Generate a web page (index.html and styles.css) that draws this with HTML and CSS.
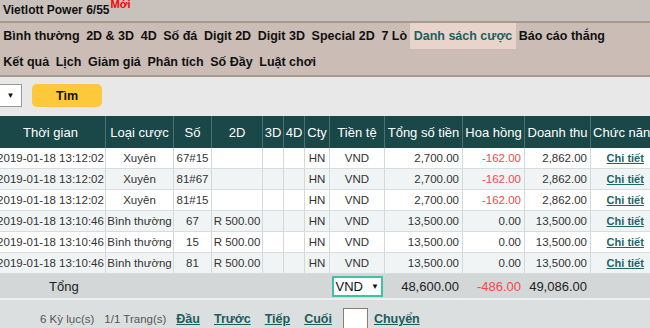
FILE: index.html
```html
<!DOCTYPE html>
<html lang="vi">
<head>
<meta charset="utf-8">
<title>Danh sách cược</title>
<link rel="stylesheet" href="styles.css">
</head>
<body>
<header class="top">
  <div class="title">Vietlott Power 6/55<span class="new">Mới</span></div>
  <nav class="menu">
    <div class="menu-row">
      <a class="menu-item" href="#">Bình thường</a>
      <a class="menu-item" href="#">2D &amp; 3D</a>
      <a class="menu-item" href="#">4D</a>
      <a class="menu-item" href="#">Số đá</a>
      <a class="menu-item" href="#">Digit 2D</a>
      <a class="menu-item" href="#">Digit 3D</a>
      <a class="menu-item" href="#">Special 2D</a>
      <a class="menu-item" href="#">7 Lò</a>
      <a class="menu-item active" href="#">Danh sách cược</a>
      <a class="menu-item" href="#">Báo cáo thắng</a>
    </div>
    <div class="menu-row">
      <a class="menu-item" href="#">Kết quả</a>
      <a class="menu-item" href="#">Lịch</a>
      <a class="menu-item" href="#">Giảm giá</a>
      <a class="menu-item" href="#">Phân tích</a>
      <a class="menu-item" href="#">Số Đầy</a>
      <a class="menu-item" href="#">Luật chơi</a>
    </div>
  </nav>
</header>
<main class="content">
  <div class="filter">
    <div class="select-stub"><span class="arrow">▼</span></div>
    <button class="btn-find" type="button">Tìm</button>
  </div>
  <table class="grid">
    <colgroup>
      <col class="c-time"><col class="c-type"><col class="c-num"><col class="c-2d"><col class="c-3d"><col class="c-4d"><col class="c-cty"><col class="c-cur"><col class="c-total"><col class="c-comm"><col class="c-rev"><col class="c-act">
    </colgroup>
    <thead>
      <tr>
        <th>Thời gian</th><th>Loại cược</th><th>Số</th><th>2D</th><th>3D</th><th>4D</th><th>Cty</th><th>Tiền tệ</th><th>Tổng số tiền</th><th>Hoa hồng</th><th>Doanh thu</th><th>Chức năng</th>
      </tr>
    </thead>
    <tbody>
      <tr>
        <td>2019-01-18 13:12:02</td><td>Xuyên</td><td>67#15</td><td></td><td></td><td></td><td>HN</td><td>VND</td><td class="num">2,700.00</td><td class="num neg">-162.00</td><td class="num">2,862.00</td><td><a class="detail" href="#">Chi tiết</a></td>
      </tr>
      <tr>
        <td>2019-01-18 13:12:02</td><td>Xuyên</td><td>81#67</td><td></td><td></td><td></td><td>HN</td><td>VND</td><td class="num">2,700.00</td><td class="num neg">-162.00</td><td class="num">2,862.00</td><td><a class="detail" href="#">Chi tiết</a></td>
      </tr>
      <tr>
        <td>2019-01-18 13:12:02</td><td>Xuyên</td><td>81#15</td><td></td><td></td><td></td><td>HN</td><td>VND</td><td class="num">2,700.00</td><td class="num neg">-162.00</td><td class="num">2,862.00</td><td><a class="detail" href="#">Chi tiết</a></td>
      </tr>
      <tr>
        <td>2019-01-18 13:10:46</td><td>Bình thường</td><td>67</td><td>R 500.00</td><td></td><td></td><td>HN</td><td>VND</td><td class="num">13,500.00</td><td class="num">0.00</td><td class="num">13,500.00</td><td><a class="detail" href="#">Chi tiết</a></td>
      </tr>
      <tr>
        <td>2019-01-18 13:10:46</td><td>Bình thường</td><td>15</td><td>R 500.00</td><td></td><td></td><td>HN</td><td>VND</td><td class="num">13,500.00</td><td class="num">0.00</td><td class="num">13,500.00</td><td><a class="detail" href="#">Chi tiết</a></td>
      </tr>
      <tr>
        <td>2019-01-18 13:10:46</td><td>Bình thường</td><td>81</td><td>R 500.00</td><td></td><td></td><td>HN</td><td>VND</td><td class="num">13,500.00</td><td class="num">0.00</td><td class="num">13,500.00</td><td><a class="detail" href="#">Chi tiết</a></td>
      </tr>
    </tbody>
    <tfoot>
      <tr class="sum">
        <td colspan="7" class="sum-label">Tổng</td>
        <td><div class="cur-select"><span>VND</span><span class="arrow">▼</span></div></td>
        <td class="num">48,600.00</td>
        <td class="num neg">-486.00</td>
        <td class="num">49,086.00</td>
        <td></td>
      </tr>
    </tfoot>
  </table>
  <div class="pager">
    <span class="count">6 Kỳ lục(s)</span>
    <span class="pages">1/1 Trang(s)</span>
    <a class="plink first" href="#">Đầu</a>
    <a class="plink" href="#">Trước</a>
    <a class="plink" href="#">Tiếp</a>
    <a class="plink" href="#">Cuối</a>
    <span class="page-input"></span>
    <a class="plink go" href="#">Chuyển</a>
  </div>
</main>
</body>
</html>
```

FILE: styles.css
```css
html, body {
  margin: 0;
  padding: 0;
  overflow: hidden;
}

body {
  background: #e8e8e8;
  font-family: "Liberation Sans", Arial, sans-serif;
  color: #111;
}

.title {
  height: 21px;
  line-height: 21px;
  padding-left: 3px;
  font-size: 12px;
  font-weight: bold;
  background: #c9c1bc;
  border-bottom: 2px solid #a59a8b;
  color: #111;
  white-space: nowrap;
}

.new {
  color: #ff0000;
  font-size: 11px;
  line-height: 0;
  vertical-align: 6px;
  margin-left: 1px;
}

.menu {
  background: #cbbdb6;
  border-bottom: 2px solid #a59a8b;
}

.menu-row {
  display: flex;
  height: 26px;
  white-space: nowrap;
}

.menu-item {
  padding: 0 3.3px;
  line-height: 26px;
  font-size: 12.5px;
  font-weight: bold;
  color: #111;
  text-decoration: none;
}

.menu-item.active {
  background: #e9d4cc;
  color: #1b5f60;
}

.filter {
  display: flex;
  gap: 10px;
  margin-top: 7px;
  height: 23px;
}

.select-stub {
  width: 21px;
  height: 21px;
  background: #fff;
  border: 1px solid #9a9a9a;
  border-left: 0;
  display: flex;
  align-items: center;
  justify-content: center;
}

.arrow {
  font-size: 8px;
  color: #111;
}

.btn-find {
  width: 70px;
  height: 23px;
  background: #fdc93b;
  border: 0;
  border-radius: 5px;
  padding: 0;
  font-family: "Liberation Sans", Arial, sans-serif;
  font-size: 12.5px;
  font-weight: bold;
  color: #111;
}

.grid {
  margin-top: 9px;
  margin-left: -5px;
  width: 664px;
  table-layout: fixed;
  border-collapse: collapse;
  font-size: 11.5px;
  color: #333;
}

.c-time { width: 110px; }
.c-type { width: 68px; }
.c-num { width: 38px; }
.c-2d { width: 51px; }
.c-3d { width: 21px; }
.c-4d { width: 21px; }
.c-cty { width: 25px; }
.c-cur { width: 55px; }
.c-total { width: 78px; }
.c-comm { width: 62px; }
.c-rev { width: 66px; }
.c-act { width: 69px; }

.grid th {
  height: 32px;
  padding: 0;
  background: #1a4747;
  color: #fff;
  font-size: 13px;
  font-weight: normal;
  border-left: 1px solid #4b7272;
  white-space: nowrap;
  overflow: hidden;
}

.grid td {
  height: 20px;
  padding: 0;
  text-align: center;
  border-left: 1px solid #d3d8d8;
  border-bottom: 1px solid #d7dcdc;
  white-space: nowrap;
  overflow: hidden;
}

.grid tbody tr {
  background: #fff;
}

.grid tbody tr:nth-child(even) {
  background: #f1f4f5;
}

.grid td.num {
  text-align: right;
  padding-right: 3px;
}

.grid td.neg {
  color: #f24a4a;
}

.detail {
  color: #1d6567;
  font-weight: bold;
  font-size: 11px;
}

.grid tr.sum td {
  height: 24px;
  background: #d3d7d7;
  font-size: 13px;
  color: #222;
  border-bottom: 0;
}

.grid tr.sum td.neg {
  color: #f24a4a;
}

.grid td.sum-label {
  text-align: left;
  padding-left: 53px;
}

.cur-select {
  box-sizing: border-box;
  width: 51px;
  height: 21px;
  margin: 0 auto;
  padding-left: 2px;
  display: flex;
  align-items: center;
  gap: 8px;
  background: #fff;
  border: 2px solid #3cc5a5;
  font-size: 13px;
  color: #111;
}

.pager {
  display: flex;
  align-items: center;
  height: 38px;
  padding-left: 40px;
  background: #dcdfdf;
  border-top: 2px solid #eef0f0;
  font-size: 11.5px;
  color: #555;
  white-space: nowrap;
}

.pages {
  margin-left: 10px;
}

.plink {
  color: #1b5c5d;
  font-weight: bold;
  font-size: 12.5px;
  margin-left: 14px;
}

.plink.first {
  margin-left: 10px;
}

.page-input {
  box-sizing: border-box;
  width: 25px;
  height: 23px;
  margin-left: 11px;
  background: #fff;
  border: 1px solid #8d7b6a;
}

.plink.go {
  margin-left: 6px;
}
```
